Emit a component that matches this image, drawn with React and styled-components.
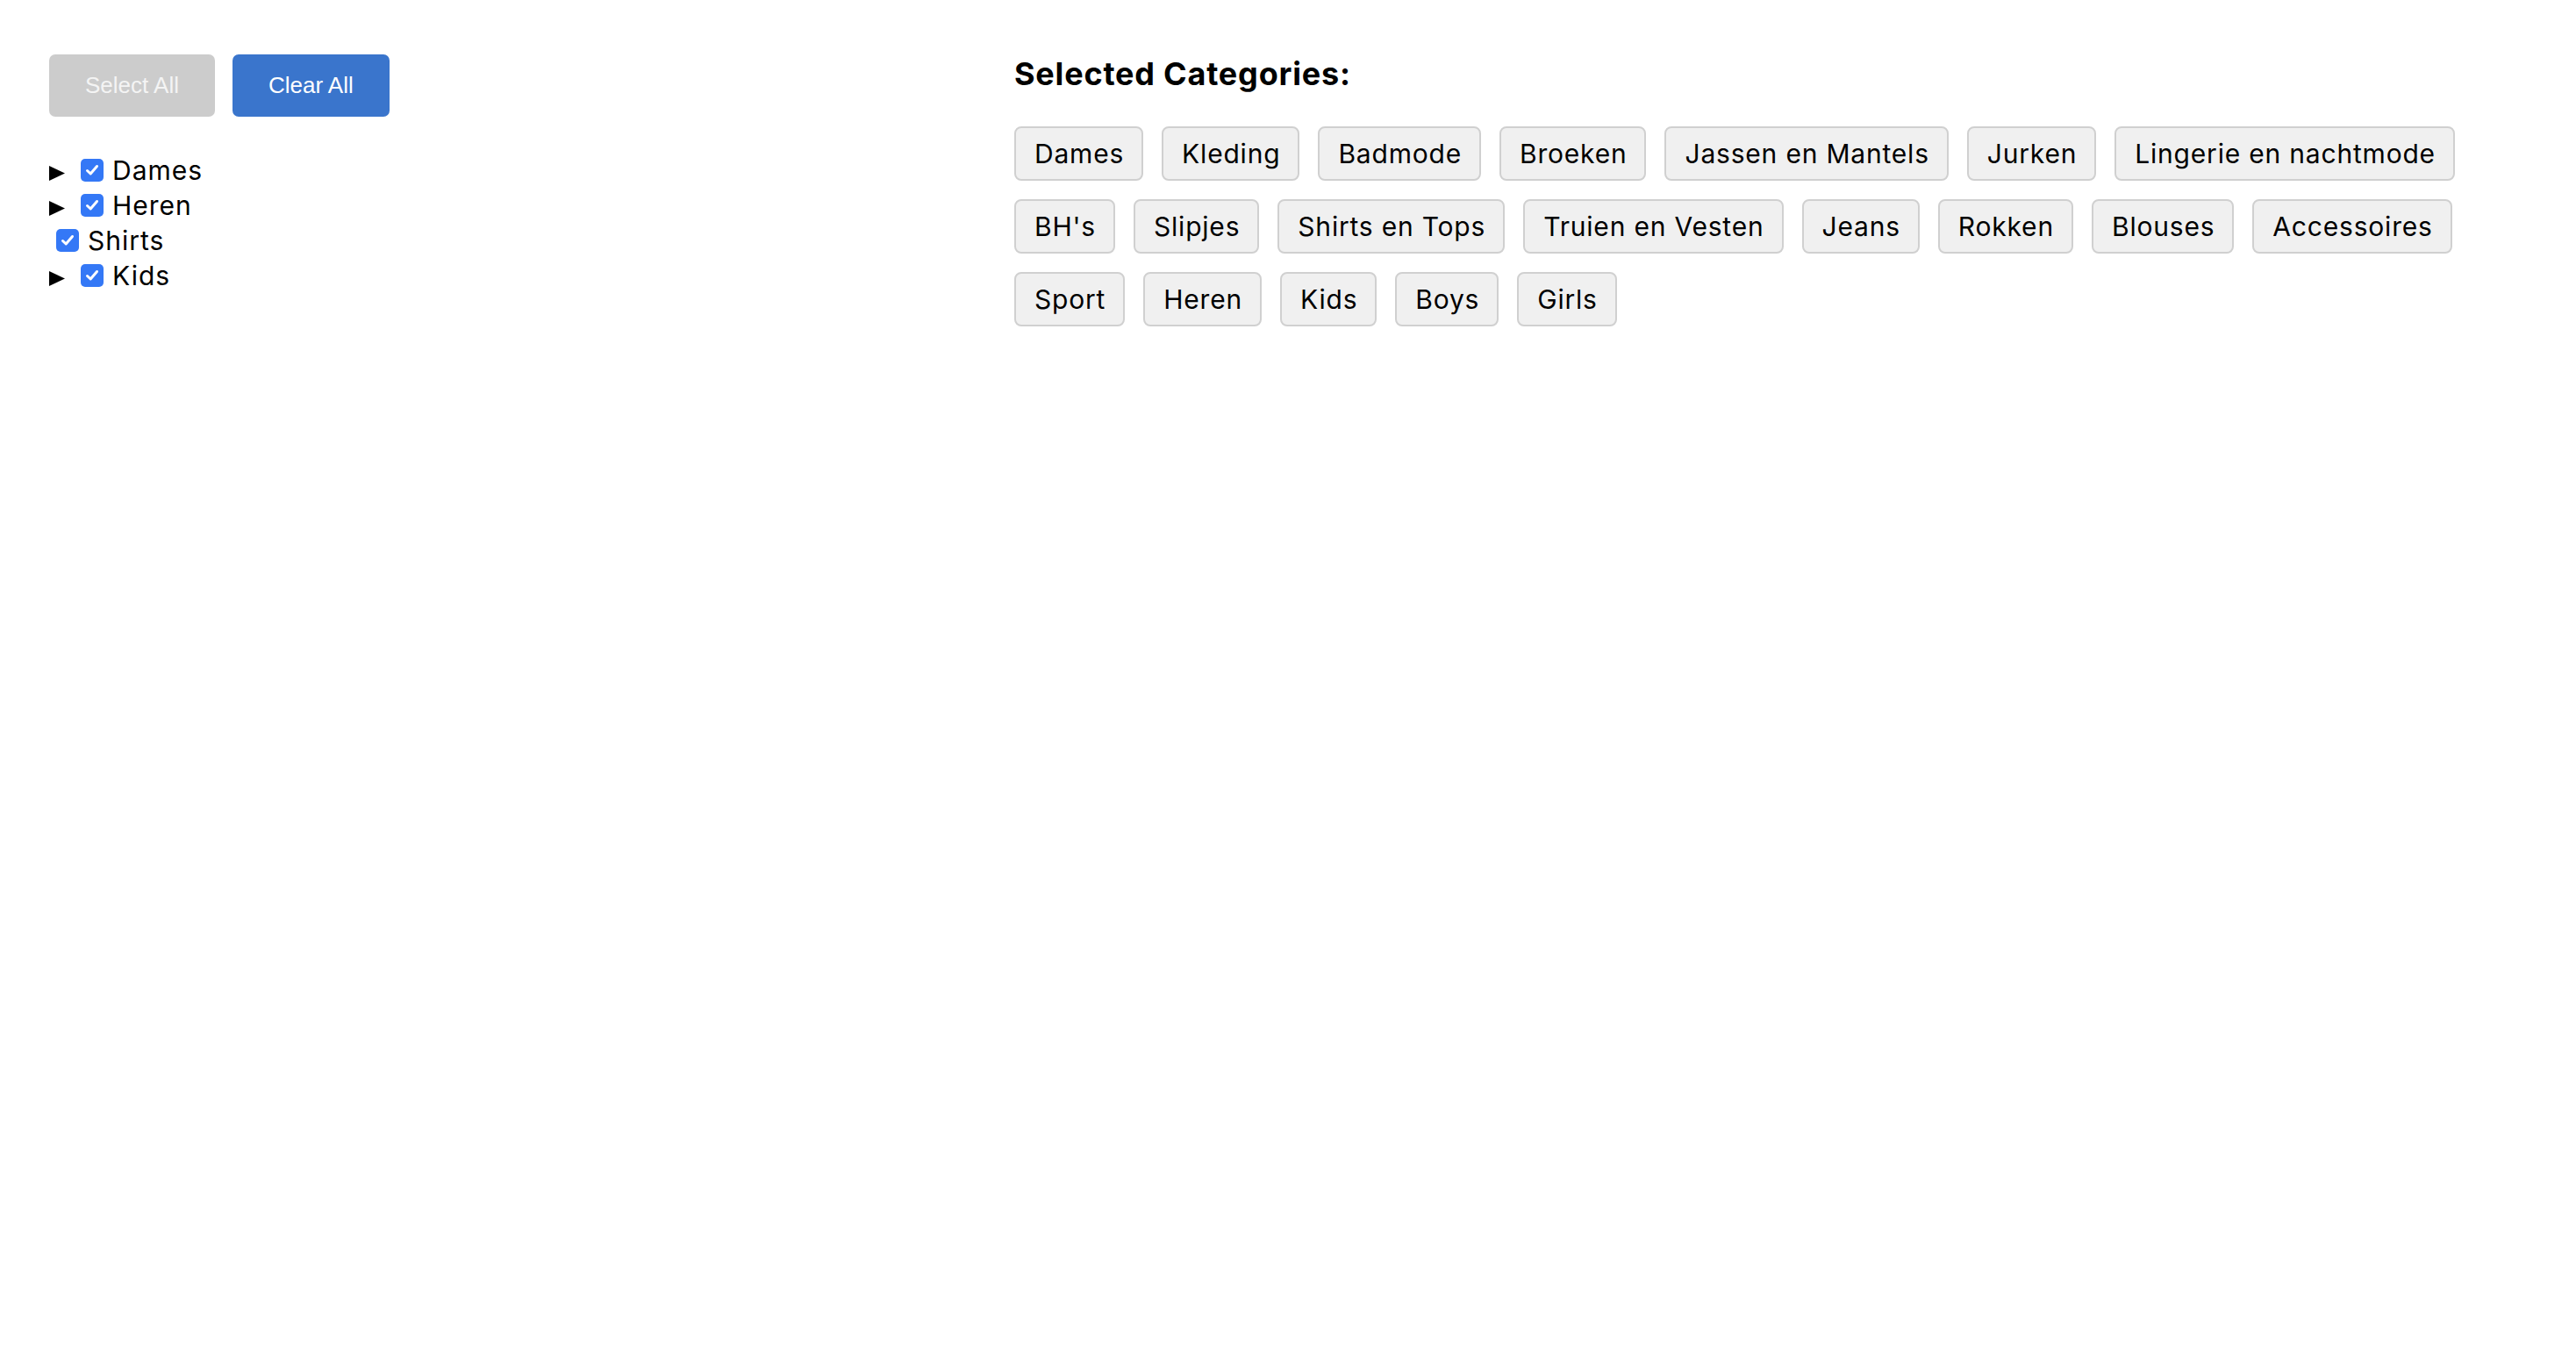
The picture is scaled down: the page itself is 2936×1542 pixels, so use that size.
import React, { useState } from "react";
import styled, { createGlobalStyle } from "styled-components";

const GlobalStyle = createGlobalStyle`
  html, body {
    margin: 0;
    padding: 0;
    background: #fff;
    font-family: Inter, "Noto Sans", sans-serif;
    color: #000;
  }
`;

const Page = styled.div`
  display: flex;
  align-items: flex-start;
  padding: 62px 56px;
`;

const LeftPanel = styled.div`
  flex: 0 0 1100px;
  display: flex;
  flex-direction: column;
`;

const ButtonBar = styled.div`
  display: flex;
  gap: 20px;
`;

const ActionButton = styled.button`
  height: 71px;
  padding: 0 41px;
  border: none;
  border-radius: 7px;
  font-family: "Liberation Sans", Arial, sans-serif;
  font-size: 26px;
  color: ${(p) => (p.$disabled ? "#f4f4f4" : "#fff")};
  background: ${(p) => (p.$disabled ? "#cccccc" : "#3a75cc")};
  cursor: ${(p) => (p.$disabled ? "default" : "pointer")};
`;

const Tree = styled.ul`
  list-style: none;
  margin: 41px 0 0;
  padding: 0;
`;

const TreeRow = styled.li`
  display: flex;
  align-items: center;
  height: 40px;
  padding-left: ${(p) => (p.$leaf ? "8px" : "0")};
  font-size: 30px;
  letter-spacing: 1px;
`;

const Marker = styled.span`
  display: flex;
  width: 18px;
  height: 17px;
  margin: 6px 18px 0 0;
`;

const Check = styled.span`
  display: flex;
  align-items: center;
  justify-content: center;
  width: 26px;
  height: 26px;
  border-radius: 5px;
  background: #3478f6;
  margin-right: 10px;
`;

const RightPanel = styled.div`
  flex: 1;
`;

const Heading = styled.h3`
  margin: 0;
  font-size: 36px;
  font-weight: 700;
  line-height: 44px;
  letter-spacing: 0.8px;
`;

const TagList = styled.div`
  display: flex;
  flex-wrap: wrap;
  gap: 21px;
  margin-top: 38px;
`;

const Tag = styled.span`
  display: inline-block;
  padding: 11px 20px 11px 21px;
  border: 2px solid #d0d0d0;
  border-radius: 8px;
  background: #f0f0f0;
  font-size: 30px;
  line-height: 36px;
  letter-spacing: 0.8px;
`;

const tree = [
  { name: "Dames", children: true },
  { name: "Heren", children: true },
  { name: "Shirts", children: false },
  { name: "Kids", children: true },
];

const selected = [
  "Dames",
  "Kleding",
  "Badmode",
  "Broeken",
  "Jassen en Mantels",
  "Jurken",
  "Lingerie en nachtmode",
  "BH's",
  "Slipjes",
  "Shirts en Tops",
  "Truien en Vesten",
  "Jeans",
  "Rokken",
  "Blouses",
  "Accessoires",
  "Sport",
  "Heren",
  "Kids",
  "Boys",
  "Girls",
];

const Triangle = () => (
  <svg width="18" height="17" viewBox="0 0 18 17">
    <polygon points="0,0 18,8.5 0,17" fill="#000" />
  </svg>
);

const Checkmark = () => (
  <svg width="18" height="18" viewBox="0 0 18 18">
    <path
      d="M3.5 9.5 L7.2 13 L14.5 4.5"
      fill="none"
      stroke="#fff"
      strokeWidth="3"
      strokeLinecap="round"
      strokeLinejoin="round"
    />
  </svg>
);

export default function App() {
  const [items] = useState(selected);

  return (
    <>
      <GlobalStyle />
      <Page>
        <LeftPanel>
          <ButtonBar>
            <ActionButton $disabled>Select All</ActionButton>
            <ActionButton>Clear All</ActionButton>
          </ButtonBar>
          <Tree>
            {tree.map((node) => (
              <TreeRow key={node.name} $leaf={!node.children}>
                {node.children && (
                  <Marker>
                    <Triangle />
                  </Marker>
                )}
                <Check>
                  <Checkmark />
                </Check>
                {node.name}
              </TreeRow>
            ))}
          </Tree>
        </LeftPanel>
        <RightPanel>
          <Heading>Selected Categories:</Heading>
          <TagList>
            {items.map((c, i) => (
              <Tag key={i}>{c}</Tag>
            ))}
          </TagList>
        </RightPanel>
      </Page>
    </>
  );
}
